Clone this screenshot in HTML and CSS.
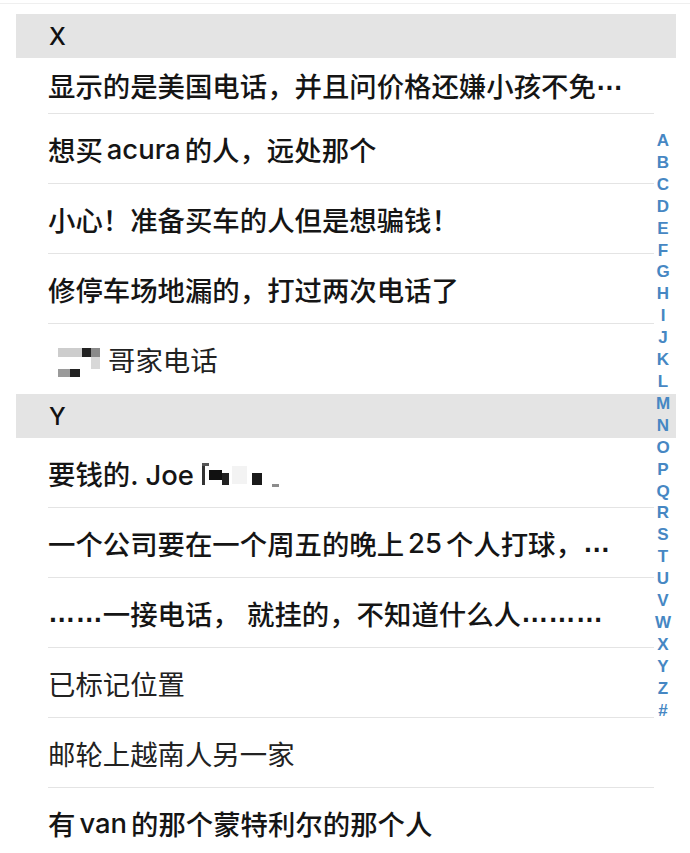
FILE: index.html
```html
<!DOCTYPE html>
<html lang="zh-CN">

<head>
    <meta charset="UTF-8">
    <meta name="viewport" content="width=device-width, initial-scale=1.0">
    <title>Contacts</title>
    <link rel="stylesheet" href="styles.css">
</head>

<body>
    <div class="top-rule"></div>

    <div class="list">
        <section class="section">
            <div class="section-head">X</div>
            <ul class="rows">
                <li class="row first">显示的是美国电话，并且问价格还嫌小孩不免<span class="dots">…</span></li>
                <li class="row">想买<span class="latin">acura</span>的人，远处那个</li>
                <li class="row">小心！准备买车的人但是想骗钱！</li>
                <li class="row">修停车场地漏的，打过两次电话了</li>
                <li class="row light">
                    <!-- blurred name -->
                    <svg class="mosaic" width="60" height="38" viewBox="0 0 60 38">
                        <rect x="10" y="8" width="24" height="9" fill="#cdcdcd" />
                        <rect x="34" y="8" width="9" height="9" fill="#222" />
                        <rect x="43" y="8" width="9" height="9" fill="#8a8a8a" />
                        <rect x="43" y="17" width="9" height="12" fill="#d8d8d8" />
                        <rect x="10" y="29" width="12" height="8" fill="#9a9a9a" />
                        <rect x="22" y="29" width="10" height="8" fill="#222" />
                    </svg>哥家电话
                </li>
            </ul>
        </section>

        <section class="section">
            <div class="section-head">Y</div>
            <ul class="rows">
                <li class="row">要钱的. Joe
                    <svg class="mosaic joe" width="80" height="34" viewBox="0 0 80 34">
                        <rect x="0" y="7" width="3" height="22" fill="#333" />
                        <rect x="0" y="7" width="7" height="3" fill="#555" />
                        <rect x="7" y="14" width="13" height="10" fill="#111" />
                        <rect x="20" y="17" width="7" height="12" fill="#222" />
                        <rect x="30" y="10" width="15" height="18" fill="#f3f3f3" />
                        <rect x="50" y="17" width="10" height="12" fill="#1a1a1a" />
                        <rect x="70" y="28" width="7" height="3" fill="#8c8c8c" />
                    </svg>
                </li>
                <li class="row">一个公司要在一个周五的晚上<span class="latin">25</span>个人打球，<span class="dots">…</span></li>
                <li class="row"><span class="dots">……</span>一接电话， 就挂的，不知道什么人<span class="dots">………</span></li>
                <li class="row light">已标记位置</li>
                <li class="row light">邮轮上越南人另一家</li>
                <li class="row">有<span class="latin">van</span>的那个蒙特利尔的那个人</li>
            </ul>
        </section>
    </div>

    <!-- section index on the right edge -->
    <nav class="index">
        <span>A</span><span>B</span><span>C</span><span>D</span><span>E</span><span>F</span><span>G</span>
        <span>H</span><span>I</span><span>J</span><span>K</span><span>L</span><span>M</span><span>N</span>
        <span>O</span><span>P</span><span>Q</span><span>R</span><span>S</span><span>T</span><span>U</span>
        <span>V</span><span>W</span><span>X</span><span>Y</span><span>Z</span><span>#</span>
    </nav>
</body>

</html>
```

FILE: styles.css
```css
/* Reset */
html,
body,
ul {
    margin: 0;
    padding: 0;
}

body {
    position: relative;
    height: 853px;
    overflow: hidden;
    background-color: #fff;
    color: #151515;
    font-family: "Inter", "Noto Sans CJK SC", sans-serif;
}

ul {
    list-style-type: none;
}

/* faint line left over from the search bar */
.top-rule {
    margin-top: 3px;
    height: 10px;
    border-top: 1px solid #efefef;
}

.list {
    margin: 0 14px 0 16px;
}

/* grey band with the letter */
.section-head {
    height: 44px;
    display: flex;
    align-items: center;
    padding-left: 33px;
    background-color: #e4e4e4;
    font-size: 24px;
    font-weight: 500;
    color: #111;
}

.row {
    height: 69px;
    margin: 0 22px 0 32px;
    display: flex;
    align-items: center;
    white-space: nowrap;
    border-bottom: 1px solid #e4e4e4;
    font-size: 27.4px;
    font-weight: 500;
}

.row:last-child {
    height: 70px;
    border-bottom: none;
}

.row.first {
    height: 56px;
    align-items: flex-start;
    padding-top: 7px;
    box-sizing: border-box;
}

.row.light {
    font-weight: 400;
    color: #222;
}

/* latin words typed between chinese ones */
.latin {
    margin: 0 4px;
}

.dots {
    font-family: "Liberation Sans", sans-serif;
    font-weight: 700;
}

.mosaic {
    flex: none;
}

.mosaic.joe {
    margin-left: 8px;
}

/* A-Z index */
.index {
    position: absolute;
    top: 130px;
    left: 652px;
    width: 22px;
    display: flex;
    flex-direction: column;
    align-items: center;
    font-family: "Liberation Sans", sans-serif;
    font-size: 17px;
    font-weight: 700;
    line-height: 21.9px;
    color: #4687c3;
}
```
